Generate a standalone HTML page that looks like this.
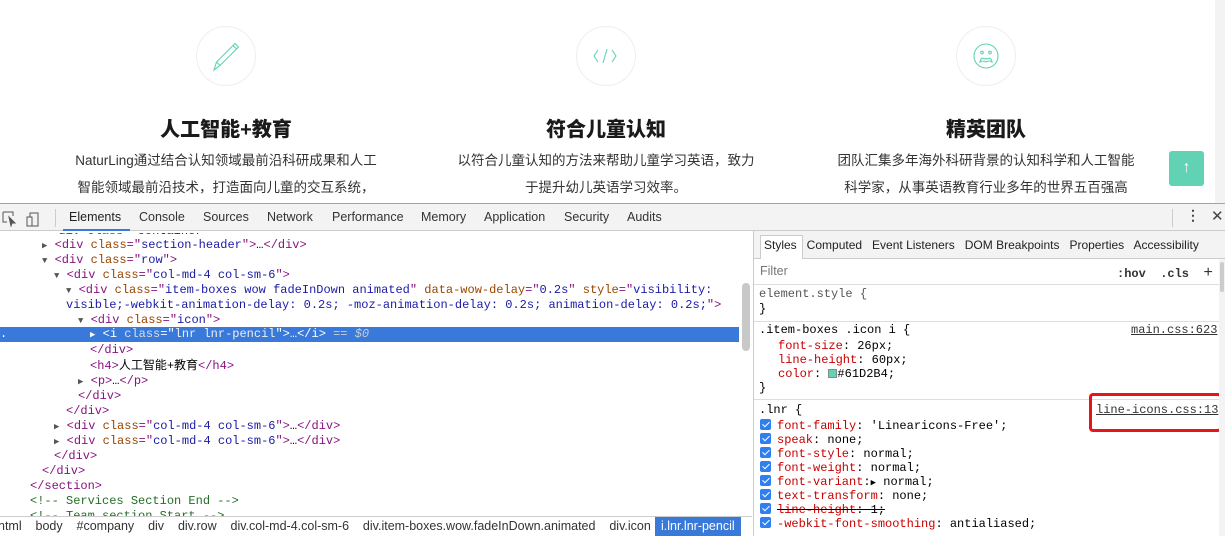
<!DOCTYPE html>
<html><head><meta charset="utf-8"><style>
*{margin:0;padding:0;box-sizing:border-box}
body{width:1225px;height:536px;overflow:hidden;background:#fff;font-family:"Liberation Sans","Noto Sans CJK SC",sans-serif;position:relative}
.abs{position:absolute}
.circ{position:absolute;width:60px;height:60px;border:1px solid #eee;border-radius:50%;top:26px}
.h{position:absolute;top:113px;font-size:20px;font-weight:900;color:#1a1a1a;text-align:center;width:300px}
.p{position:absolute;font-size:13.5px;color:#333;text-align:center;width:360px;line-height:27px;top:147px}
.mono{font-family:"Liberation Mono",monospace;font-size:12px}
.ln{position:absolute;white-space:pre;height:15px;line-height:15px}
.tg{color:#881280}.at{color:#994500}.av{color:#1a1aa6}.cm{color:#236e25}
.tb{position:absolute;top:210px;font-size:12.5px;color:#333}
.tri{font-size:9px;color:#555}
.pr{color:#c80000}
.cb{display:inline-block;width:11px;height:11px;background:#2e7ff0;border-radius:2px;vertical-align:-1px;margin-right:6px;position:relative}
.cb:after{content:"";position:absolute;left:3.5px;top:1px;width:3px;height:6px;border:solid #fff;border-width:0 1.5px 1.5px 0;transform:rotate(45deg)}
</style></head><body>
<div class="circ" style="left:196px"></div>
<div class="circ" style="left:576px"></div>
<div class="circ" style="left:956px"></div>
<svg class="abs" style="left:210px;top:40px" width="32" height="32" viewBox="0 0 32 32" fill="none" stroke="#61D2B4" stroke-width="1.1"><path d="M4 30 L6.5 22 L25 3.5 L28.5 7 L10 25.5 Z M6.5 22 L10 25.5 M23 5.5 L26.5 9"/></svg>
<svg class="abs" style="left:592px;top:48px" width="26" height="16" viewBox="0 0 26 16" fill="none" stroke="#61D2B4" stroke-width="1.1"><path d="M6 2 L2 8 L6 14 M20 2 L24 8 L20 14 M15 1 L11 15"/></svg>
<svg class="abs" style="left:970px;top:40px" width="32" height="32" viewBox="0 0 32 32" fill="none" stroke="#61D2B4" stroke-width="1.1"><circle cx="16" cy="16" r="12"/><circle cx="12" cy="12.5" r="1.3"/><circle cx="20" cy="12.5" r="1.3"/><path d="M10 22 Q11 17 13.5 18.5 Q16 19.5 16 18 Q16 19.5 18.5 18.5 Q21 17 22 22 Q19 20 16 22 Q13 20 10 22Z"/></svg>
<div class="h" style="left:76px">人工智能+教育</div>
<div class="h" style="left:456px">符合儿童认知</div>
<div class="h" style="left:836px">精英团队</div>
<div class="p" style="left:46px">NaturLing通过结合认知领域最前沿科研成果和人工<br>智能领域最前沿技术，打造面向儿童的交互系统，</div>
<div class="p" style="left:426px">以符合儿童认知的方法来帮助儿童学习英语，致力<br>于提升幼儿英语学习效率。</div>
<div class="p" style="left:806px">团队汇集多年海外科研背景的认知科学和人工智能<br>科学家，从事英语教育行业多年的世界五百强高</div>
<div class="abs" style="left:1169px;top:151px;width:35px;height:35px;background:#61D2B4;border-radius:3px;color:#fff;text-align:center;line-height:34px;font-size:16px">↑</div>
<div class="abs" style="left:1215px;top:0;width:10px;height:204px;background:#f3f3f3"></div>
<div class="abs" style="left:0;top:203px;width:1225px;height:333px;background:#fff;border-top:1px solid #a3a3a3"></div>
<div class="abs" style="left:0;top:204px;width:1225px;height:27px;background:#f3f3f3;border-bottom:1px solid #ccc"></div>
<svg class="abs" style="left:2px;top:211px" width="40" height="16" fill="none" stroke="#555" stroke-width="1"><path d="M1 1h10v4M1 1v10h4"/><path d="M7 6l6 6-3 0 -1 3z" fill="#555"/><rect x="28" y="2" width="8" height="13"/><rect x="25" y="6" width="5" height="9" fill="#f3f3f3"/></svg>
<div class="abs" style="left:55px;top:209px;width:1px;height:18px;background:#ccc"></div>
<div class="tb" style="left:69px;color:#222">Elements</div>
<div class="abs" style="left:63px;top:229px;width:67px;height:2px;background:#3879d9"></div>
<div class="tb" style="left:139px">Console</div>
<div class="tb" style="left:203px">Sources</div>
<div class="tb" style="left:267px">Network</div>
<div class="tb" style="left:332px">Performance</div>
<div class="tb" style="left:421px">Memory</div>
<div class="tb" style="left:484px">Application</div>
<div class="tb" style="left:564px">Security</div>
<div class="tb" style="left:627px">Audits</div>
<div class="abs" style="left:1172px;top:209px;width:1px;height:18px;background:#ccc"></div>
<div class="abs" style="left:1186px;top:207px;font-size:14px;color:#444;font-weight:bold">⋮</div>
<div class="abs" style="left:1211px;top:207px;font-size:15px;color:#444">✕</div>
<div class="mono">
<div class="ln" style="left:44px;top:224px;color:#881280;clip-path:inset(9px 0 0 0)">▾<span class="tg">&lt;div </span><span class="at">class</span>=<span class="av">"container"</span>&gt;</div>
<div class="ln" style="left:42px;top:238px"><span class="tri">▶</span> <span class="tg">&lt;div </span><span class="at">class</span><span class="tg">="</span><span class="av">section-header</span><span class="tg">"&gt;</span>…<span class="tg">&lt;/div&gt;</span></div>
<div class="ln" style="left:42px;top:253px"><span class="tri">▼</span> <span class="tg">&lt;div </span><span class="at">class</span><span class="tg">="</span><span class="av">row</span><span class="tg">"&gt;</span></div>
<div class="ln" style="left:54px;top:268px"><span class="tri">▼</span> <span class="tg">&lt;div </span><span class="at">class</span><span class="tg">="</span><span class="av">col-md-4 col-sm-6</span><span class="tg">"&gt;</span></div>
<div class="ln" style="left:66px;top:283px"><span class="tri">▼</span> <span class="tg">&lt;div </span><span class="at">class</span><span class="tg">="</span><span class="av">item-boxes wow fadeInDown animated</span><span class="tg">" </span><span class="at">data-wow-delay</span><span class="tg">="</span><span class="av">0.2s</span><span class="tg">" </span><span class="at">style</span><span class="tg">="</span><span class="av">visibility:</span></div>
<div class="ln" style="left:66px;top:298px"><span class="av">visible;-webkit-animation-delay: 0.2s; -moz-animation-delay: 0.2s; animation-delay: 0.2s;</span><span class="tg">"&gt;</span></div>
<div class="ln" style="left:78px;top:313px"><span class="tri">▼</span> <span class="tg">&lt;div </span><span class="at">class</span><span class="tg">="</span><span class="av">icon</span><span class="tg">"&gt;</span></div>
<div class="abs" style="left:0;top:327px;width:739px;height:15px;background:#3879d9"></div>
<div class="ln" style="left:0;top:327px;color:#fff">.</div>
<div class="ln" style="left:90px;top:327px;color:#fff"><span class="tri" style="color:#fff">▶</span> &lt;i <span style="color:#ddd">class</span>="<span style="color:#eee">lnr lnr-pencil</span>"&gt;…&lt;/i&gt; <span style="color:#ccc">== <i>$0</i></span></div>
<div class="ln" style="left:90px;top:343px"><span class="tg">&lt;/div&gt;</span></div>
<div class="ln" style="left:90px;top:359px;font-family:'Liberation Mono','Noto Sans CJK SC',monospace"><span class="tg">&lt;h4&gt;</span>人工智能+教育<span class="tg">&lt;/h4&gt;</span></div>
<div class="ln" style="left:78px;top:374px"><span class="tri">▶</span> <span class="tg">&lt;p&gt;</span>…<span class="tg">&lt;/p&gt;</span></div>
<div class="ln" style="left:78px;top:389px"><span class="tg">&lt;/div&gt;</span></div>
<div class="ln" style="left:66px;top:404px"><span class="tg">&lt;/div&gt;</span></div>
<div class="ln" style="left:54px;top:419px"><span class="tri">▶</span> <span class="tg">&lt;div </span><span class="at">class</span><span class="tg">="</span><span class="av">col-md-4 col-sm-6</span><span class="tg">"&gt;</span>…<span class="tg">&lt;/div&gt;</span></div>
<div class="ln" style="left:54px;top:434px"><span class="tri">▶</span> <span class="tg">&lt;div </span><span class="at">class</span><span class="tg">="</span><span class="av">col-md-4 col-sm-6</span><span class="tg">"&gt;</span>…<span class="tg">&lt;/div&gt;</span></div>
<div class="ln" style="left:54px;top:449px"><span class="tg">&lt;/div&gt;</span></div>
<div class="ln" style="left:42px;top:464px"><span class="tg">&lt;/div&gt;</span></div>
<div class="ln" style="left:30px;top:479px"><span class="tg">&lt;/section&gt;</span></div>
<div class="ln" style="left:30px;top:494px"><span class="cm">&lt;!-- Services Section End --&gt;</span></div>
<div class="ln" style="left:30px;top:509px;clip-path:inset(0 0 8px 0)"><span class="cm">&lt;!-- Team section Start --&gt;</span></div>
</div>
<div class="abs" style="left:742px;top:283px;width:8px;height:68px;background:#c8c8c8;border-radius:4px"></div>
<div class="abs" style="left:0;top:516px;width:752px;height:20px;background:#fff;border-top:1px solid #ccc"></div>
<div class="abs" style="left:-2px;top:519px;font-size:12.5px;color:#333;white-space:pre">ntml    body    #company    div    div.row    div.col-md-4.col-sm-6    div.item-boxes.wow.fadeInDown.animated    div.icon </div>
<div class="abs" style="left:655px;top:517px;width:86px;height:19px;background:#3879d9;color:#fff;font-size:12.5px;line-height:18px;padding-left:6px">i.lnr.lnr-pencil</div>
<div class="abs" style="left:753px;top:231px;width:1px;height:305px;background:#ccc"></div>
<div class="abs" style="left:754px;top:231px;width:471px;height:28px;background:#f3f3f3;border-bottom:1px solid #ccc"></div>
<div class="abs" style="left:760px;top:235px;width:43px;height:24px;background:#fff;border:1px solid #ccc;border-bottom:none"></div>
<div class="abs" style="left:764px;top:238px;font-size:12px;color:#222;white-space:pre">Styles   Computed   Event Listeners   DOM Breakpoints   Properties   Accessibility</div>
<div class="abs" style="left:760px;top:264px;font-size:12.5px;color:#777">Filter</div>
<div class="abs mono" style="left:1117px;top:264px;font-weight:bold;color:#333;white-space:pre">:hov  .cls  <span style="font-size:16px;font-weight:normal">+</span></div>
<div class="abs" style="left:754px;top:284px;width:465px;height:1px;background:#ddd"></div>
<div class="mono">
<div class="ln" style="left:759px;top:287px;color:#555">element.style {</div>
<div class="ln" style="left:759px;top:302px">}</div>
<div class="abs" style="left:754px;top:321px;width:465px;height:1px;background:#ddd"></div>
<div class="ln" style="left:759px;top:323px">.item-boxes .icon i {</div>
<div class="ln" style="left:1131px;top:323px;text-decoration:underline;color:#333">main.css:623</div>
<div class="ln" style="left:778px;top:339px"><span class="pr">font-size</span>: 26px;</div>
<div class="ln" style="left:778px;top:353px"><span class="pr">line-height</span>: 60px;</div>
<div class="ln" style="left:778px;top:367px"><span class="pr">color</span>: <span style="display:inline-block;width:9px;height:9px;background:#61D2B4;border:1px solid #888;vertical-align:-1px"></span>#61D2B4;</div>
<div class="ln" style="left:759px;top:381px">}</div>
<div class="abs" style="left:754px;top:399px;width:465px;height:1px;background:#ddd"></div>
<div class="ln" style="left:759px;top:403px">.lnr {</div>
<div class="ln" style="left:1096px;top:403px;text-decoration:underline;color:#333">line-icons.css:13</div>
<div class="abs" style="left:1089px;top:393px;width:133px;height:39px;border:3px solid #e8141b;border-radius:4px"></div>
<div class="ln" style="left:760px;top:419px"><span class="cb"></span><span class="pr">font-family</span>: 'Linearicons-Free';</div>
<div class="ln" style="left:760px;top:433px"><span class="cb"></span><span class="pr">speak</span>: none;</div>
<div class="ln" style="left:760px;top:447px"><span class="cb"></span><span class="pr">font-style</span>: normal;</div>
<div class="ln" style="left:760px;top:461px"><span class="cb"></span><span class="pr">font-weight</span>: normal;</div>
<div class="ln" style="left:760px;top:475px"><span class="cb"></span><span class="pr">font-variant</span>:<span style="font-size:9px">▶</span> normal;</div>
<div class="ln" style="left:760px;top:489px"><span class="cb"></span><span class="pr">text-transform</span>: none;</div>
<div class="ln" style="left:760px;top:503px"><span class="cb"></span><span style="text-decoration:line-through"><span class="pr">line-height</span>: 1;</span></div>
<div class="ln" style="left:760px;top:517px"><span class="cb"></span><span class="pr">-webkit-font-smoothing</span>: antialiased;</div>
</div>
<div class="abs" style="left:1219px;top:259px;width:6px;height:277px;background:#f3f3f3"></div>
<div class="abs" style="left:1220px;top:262px;width:4px;height:30px;background:#ccc;border-radius:2px"></div>
</body></html>
